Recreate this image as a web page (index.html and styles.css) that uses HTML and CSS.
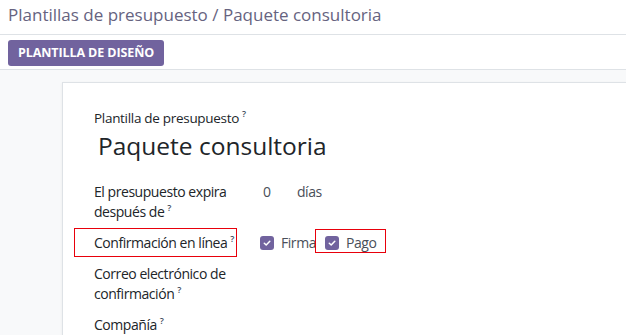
FILE: index.html
```html
<!DOCTYPE html>
<html lang="es">
<head>
<meta charset="utf-8">
<title>Paquete consultoria</title>
<link rel="stylesheet" href="styles.css">
</head>
<body>
<div class="control-panel">
  <div class="breadcrumb">Plantillas de presupuesto / Paquete consultoria</div>
</div>
<div class="toolbar">
  <button class="btn-primary">PLANTILLA DE DISEÑO</button>
</div>
<div class="content">
  <div class="sheet">
    <div class="title-label">Plantilla de presupuesto<sup>?</sup></div>
    <div class="title-name">Paquete consultoria</div>
    <div class="fields">
      <div class="label">El presupuesto expira después de<sup>?</sup></div>
      <div class="value"><span class="num">0</span><span class="unit">días</span></div>

      <div class="label"><span class="hl hl-label">Confirmación en línea<sup>?</sup></span></div>
      <div class="value checks">
        <span class="check"><span class="box"><svg viewBox="0 0 14 14" width="14" height="14"><path d="M4.3 7.2 6.2 9 9.8 5.2" fill="none" stroke="#fff" stroke-width="1.5" stroke-linecap="round" stroke-linejoin="round"/></svg></span>Firma</span>
        <span class="check hl hl-pago"><span class="box"><svg viewBox="0 0 14 14" width="14" height="14"><path d="M4.3 7.2 6.2 9 9.8 5.2" fill="none" stroke="#fff" stroke-width="1.5" stroke-linecap="round" stroke-linejoin="round"/></svg></span>Pago</span>
      </div>

      <div class="label">Correo electrónico de confirmación<sup>?</sup></div>
      <div class="value"></div>

      <div class="label">Compañía<sup>?</sup></div>
      <div class="value"></div>
    </div>
  </div>
</div>
</body>
</html>
```
FILE: styles.css
```css
html, body {
  margin: 0;
  padding: 0;
  background: #fff;
  font-family: "Open Sans", "Noto Sans", sans-serif;
  color: #212529;
  overflow: hidden;
  height: 335px;
}
.control-panel {
  height: 35px;
  border-bottom: 1px solid #dee2e6;
  display: flex;
  align-items: center;
  padding-left: 8px;
  box-sizing: border-box;
}
.breadcrumb {
  font-size: 17px;
  color: #66637f;
  margin-top: -6px;
}
.toolbar {
  height: 35px;
  border-bottom: 1px solid #dee2e6;
  display: flex;
  align-items: center;
  padding-left: 8px;
  box-sizing: border-box;
}
.btn-primary {
  background: #71639e;
  color: #fff;
  border: none;
  border-radius: 3px;
  height: 26px;
  padding: 0 10px;
  font-family: "Open Sans", sans-serif;
  font-weight: 700;
  font-size: 12.5px;
  letter-spacing: -0.1px;
  margin-top: 1px;
}
.content {
  background: #f8f9fa;
  padding: 12px 0 0 62px;
  height: 300px;
}
.sheet {
  background: #fff;
  border: 1px solid #dee2e6;
  border-right: none;
  box-shadow: 0 1px 3px rgba(0,0,0,0.06);
  height: 300px;
  padding: 27px 0 0 31px;
  box-sizing: border-box;
}
sup {
  font-size: 9px;
  color: #3c4a5c;
  margin-left: 3px;
  vertical-align: 6px;
  line-height: 0;
  font-weight: 600;
  letter-spacing: 0;
}
.title-label {
  font-size: 13.5px;
  font-weight: 500;
  line-height: 16px;
  letter-spacing: -0.3px;
}
.title-name {
  font-size: 24.5px;
  line-height: 32px;
  margin: 4px 0 0 4px;
}
.fields {
  margin-top: 20px;
  display: grid;
  grid-template-columns: 166px 1fr;
  row-gap: 11px;
  font-size: 14px;
  line-height: 20px;
  letter-spacing: -0.45px;
}
.label {
  font-weight: 500;
  width: 150px;
}
.value {
  display: flex;
  align-items: flex-start;
  color: #4a4f59;
}
.num { margin-left: 3px; width: 34px; }
.checks { align-items: center; }
.check { display: inline-flex; align-items: center; }
.box {
  width: 14px;
  height: 14px;
  border-radius: 3px;
  background: #71639e;
  display: inline-flex;
  margin-right: 7px;
}
.hl {
  position: relative;
}
.hl::after {
  content: "";
  position: absolute;
  border: 1px solid #e8000b;
}
.hl-label::after {
  left: -20px; top: -5px; width: 161px; height: 27px;
}
.hl-pago { margin-left: 9px; }
.hl-pago::after {
  left: -10px; top: -4px; width: 69px; height: 22px;
}
```
